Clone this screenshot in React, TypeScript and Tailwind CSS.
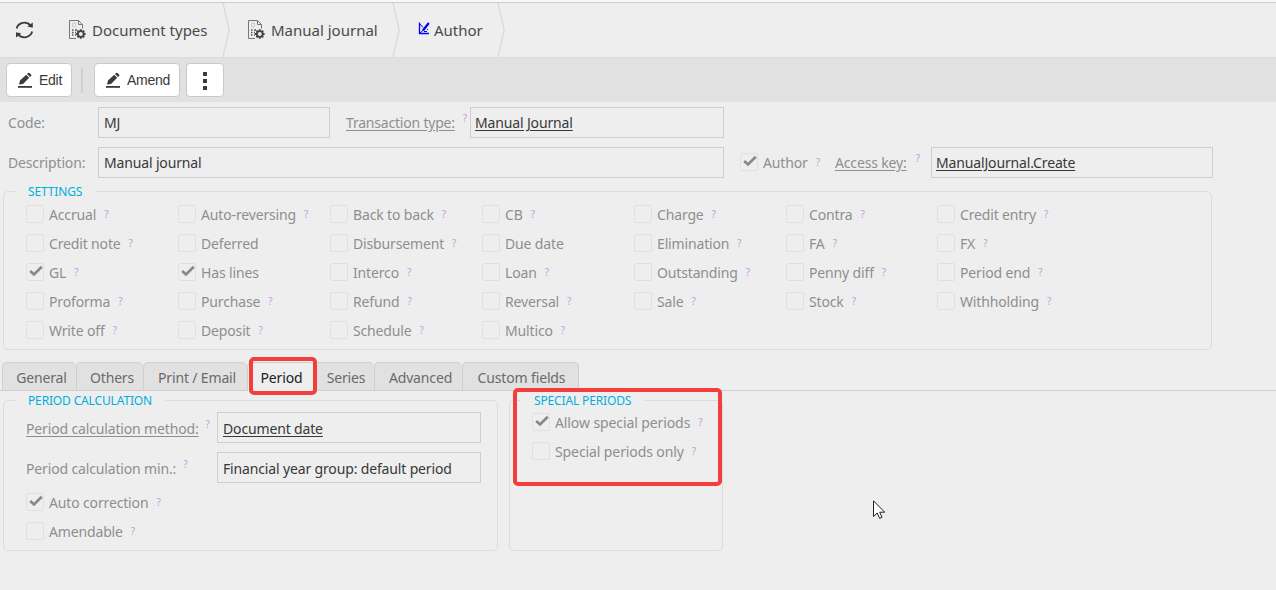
import clsx from "clsx";
import React, { ReactNode } from "react";

type Option = { label: string; help?: boolean; checked?: boolean };

// Laid out row by row, seven columns
const settings: Option[][] = [
  [
    { label: "Accrual", help: true },
    { label: "Auto-reversing", help: true },
    { label: "Back to back", help: true },
    { label: "CB", help: true },
    { label: "Charge", help: true },
    { label: "Contra", help: true },
    { label: "Credit entry", help: true },
  ],
  [
    { label: "Credit note", help: true },
    { label: "Deferred" },
    { label: "Disbursement", help: true },
    { label: "Due date" },
    { label: "Elimination", help: true },
    { label: "FA", help: true },
    { label: "FX", help: true },
  ],
  [
    { label: "GL", help: true, checked: true },
    { label: "Has lines", checked: true },
    { label: "Interco", help: true },
    { label: "Loan", help: true },
    { label: "Outstanding", help: true },
    { label: "Penny diff", help: true },
    { label: "Period end", help: true },
  ],
  [
    { label: "Proforma", help: true },
    { label: "Purchase", help: true },
    { label: "Refund", help: true },
    { label: "Reversal", help: true },
    { label: "Sale", help: true },
    { label: "Stock", help: true },
    { label: "Withholding", help: true },
  ],
  [
    { label: "Write off", help: true },
    { label: "Deposit", help: true },
    { label: "Schedule", help: true },
    { label: "Multico", help: true },
  ],
];

const tabs = [
  { label: "General", width: "w-[74px] pl-[3px]" },
  { label: "Others", width: "w-[67px] pl-[3px]" },
  { label: "Print / Email", width: "w-[104px] pl-[2px]" },
  { label: "Period", width: "w-[67px]", active: true },
  { label: "Series", width: "w-[60px] pl-[2px]" },
  { label: "Advanced", width: "w-[88px] pl-[3px]" },
  { label: "Custom fields", width: "w-[117px] pl-px" },
];

const Help = ({ raised }: { raised?: boolean }) => (
  <span
    className={clsx(
      "text-[10px] leading-none tracking-normal text-[#cb98e6]",
      raised && "mb-[9px]"
    )}
  >
    ?
  </span>
);

const CheckBox = ({ label, help, checked }: Option) => (
  <div className="flex items-center h-[18px]">
    <span className="w-[18px] h-[18px] shrink-0 rounded-[2px] border border-[#e0e0e0] flex items-center justify-center">
      {checked && (
        <svg width="14" height="12" viewBox="0 0 14 12" className="-mt-[2px] ml-px">
          <path
            d="M1.2 6 L5 9.5 L12.8 1.8"
            fill="none"
            stroke="#888"
            strokeWidth="2.7"
          />
        </svg>
      )}
    </span>
    <span className="ml-[5px] mr-[8px] pt-[2px] whitespace-nowrap">{label}</span>
    {help && <Help />}
  </div>
);

const Field = ({
  children,
  className,
  link,
}: {
  children: ReactNode;
  className: string;
  link?: boolean;
}) => (
  <div
    className={clsx(
      "h-[31px] shrink-0 border border-[#cfcfcf] flex items-center text-[#383838] whitespace-nowrap",
      link ? "pl-1" : "pl-[5px]",
      className
    )}
  >
    <span className={clsx(link && "underline underline-offset-2")}>
      {children}
    </span>
  </div>
);

const Group = ({
  title,
  className,
  children,
}: {
  title: string;
  className: string;
  children: ReactNode;
}) => (
  <fieldset
    className={clsx("relative rounded-[5px] border border-[#dcdcdc]", className)}
  >
    <legend className="ml-[11px] h-[19px] px-[13px] text-[12px] leading-[19px] tracking-[-0.15px] text-[#00aedb]">
      {title}
    </legend>
    {children}
  </fieldset>
);

const DocIcon = () => (
  <svg width="19" height="20" viewBox="0 0 19 20" fill="none">
    <path
      d="M8 18.5 H1.5 V0.5 H10.5 L14.5 4.5 V8.5 M10.5 0.5 V4.5 H14.5"
      stroke="#777"
      strokeWidth="1"
    />
    <rect x="4.5" y="3" width="3" height="4" rx="1.2" stroke="#c4c4c4" />
    <path
      d="M4 10 h1.5 M7 10 h2 M4 12.5 h1.5 M7 12.5 h1 M4 15 h1.5 M7 15 h1"
      stroke="#555"
      strokeWidth="1.3"
    />
    <circle cx="12.8" cy="14" r="2.9" stroke="#444" strokeWidth="1.9" />
    <path
      d="M12.8 9.2 V11 M12.8 17 V18.8 M8 14 H9.8 M15.8 14 H17.6 M9.4 10.6 L10.7 11.9 M14.9 16.1 L16.2 17.4 M9.4 17.4 L10.7 16.1 M14.9 11.9 L16.2 10.6"
      stroke="#444"
      strokeWidth="1.9"
    />
  </svg>
);

const AuthorIcon = () => (
  <svg
    width="12"
    height="13"
    viewBox="0 0 12 13"
    fill="none"
    stroke="#0000ff"
    className="-mt-[3px]"
  >
    <path d="M1.5 0.5 V11.5 H11" strokeWidth="1.3" />
    <path d="M1.5 1.5 L5 5.5 M1.5 11.5 L5.5 8" strokeWidth="1" />
    <path d="M10.8 1 L5 8.5" strokeWidth="2.3" />
    <path d="M6 9.5 H9 M9.5 7 V8" strokeWidth="1" />
  </svg>
);

const PenIcon = () => (
  <svg width="15" height="16" viewBox="0 0 15 16" fill="#3a3a3f">
    <path d="M1 12.4 L2 8.6 L8.2 2.8 L11.2 5.8 L5 12 Z M9 2 L10.2 1 Q11 0.5 11.7 1.2 L13.1 2.6 Q13.7 3.3 13.1 4 L12 5.1 Z" />
    <rect x="0" y="14" width="14" height="1.8" />
  </svg>
);

const RefreshIcon = () => (
  <svg width="20" height="20" viewBox="0 0 20 20" fill="none">
    <path
      d="M2.6 8.4 A8 7.6 0 0 1 16.6 5.6 M18.2 11.6 A8 7.6 0 0 1 4.2 14.4"
      stroke="#3c3c3c"
      strokeWidth="1.8"
    />
    <path d="M18.8 2.6 V7.8 L13.4 6.6 Z M2 17.4 V12.2 L7.4 13.4 Z" fill="#3c3c3c" />
  </svg>
);

const Chevron = () => (
  <svg width="9" height="54" viewBox="0 0 9 54" className="shrink-0">
    <path d="M1 0 L7.2 27 L1 54" fill="none" stroke="#d8d8d8" strokeWidth="1.2" />
  </svg>
);

const Button = ({
  children,
  className,
}: {
  children: ReactNode;
  className: string;
}) => (
  <button
    className={clsx(
      "h-[34px] flex items-center rounded-[4px] border border-[#cacaca] bg-white text-[14px] text-[#3a3a3a]",
      className
    )}
  >
    {children}
  </button>
);

const App = () => {
  return (
    <div className="relative w-[1276px] h-[590px] overflow-hidden bg-[#eeeeee] font-['Noto_Sans',sans-serif] text-[14px] leading-[20px] tracking-[-0.15px] text-[#8e8e8e]">
      {/* Breadcrumbs */}
      <div className="h-[57px] border-t-2 border-t-[#f7f7f7]">
        <div className="h-[55px] flex items-center border-t border-[#cccccc] text-[15px] tracking-normal text-[#4a4a4a]">
          <div className="w-[68px] pl-[14px]">
            <RefreshIcon />
          </div>
          <div className="w-[154px] flex items-center whitespace-nowrap">
            <DocIcon />
            <span className="ml-[5px]">Document types</span>
          </div>
          <Chevron />
          <div className="w-[161px] pl-[16px] flex items-center whitespace-nowrap">
            <DocIcon />
            <span className="ml-[5px]">Manual journal</span>
          </div>
          <Chevron />
          <div className="w-[96px] pl-[17px] flex items-center whitespace-nowrap">
            <AuthorIcon />
            <span className="ml-[4px]">Author</span>
          </div>
          <Chevron />
        </div>
      </div>

      {/* Toolbar */}
      <div className="h-[45px] pl-[6px] flex items-center border-t border-[#dadada] bg-[#e1e1e1] font-['Liberation_Sans',sans-serif] tracking-[-0.25px]">
        <Button className="w-[66px] pl-[11px] gap-[6px]">
          <PenIcon />
          Edit
        </Button>
        <div className="w-[2px] h-[25px] ml-[9px] mr-[11px] bg-[#d0d0d0]" />
        <Button className="w-[86px] pl-[11px] gap-[6px]">
          <PenIcon />
          Amend
        </Button>
        <Button className="w-[38px] ml-[6px] pt-[2px] flex-col justify-center gap-[3px]">
          <span className="w-1 h-1 bg-[#3a3a3f]" />
          <span className="w-1 h-1 bg-[#3a3a3f]" />
          <span className="w-1 h-1 bg-[#3a3a3f]" />
        </Button>
      </div>

      {/* Document header */}
      <div className="pt-[5px] pl-2 flex flex-col gap-[9px]">
        <div className="flex items-center">
          <span className="w-[90px]">Code:</span>
          <Field className="w-[232px]">MJ</Field>
          <div className="w-[140px] pl-4 pr-[3px] flex items-center justify-between whitespace-nowrap">
            <span className="underline underline-offset-2 tracking-[-0.2px]">
              Transaction type:
            </span>
            <Help raised />
          </div>
          <Field link className="w-[254px]">
            Manual Journal
          </Field>
        </div>
        <div className="flex items-center">
          <span className="w-[90px]">Description:</span>
          <Field className="w-[626px]">Manual journal</Field>
          <div className="w-[111px] pl-4 pb-[2px]">
            <CheckBox label="Author" help checked />
          </div>
          <div className="w-[96px] pr-[11px] flex items-center justify-between whitespace-nowrap">
            <span className="underline underline-offset-2">Access key:</span>
            <Help raised />
          </div>
          <Field link className="w-[282px]">
            ManualJournal.Create
          </Field>
        </div>
      </div>

      <Group title="SETTINGS" className="ml-[3px] mt-[4px] w-[1209px] h-[168px]">
        <div className="pt-[4px] pl-[22px] flex flex-col gap-[11px]">
          {settings.map((row, i) => (
            <div key={i} className="grid grid-cols-[repeat(5,152px)_151px_152px]">
              {row.map((item) => (
                <CheckBox key={item.label} {...item} />
              ))}
            </div>
          ))}
        </div>
      </Group>

      {/* Tabs */}
      <div className="mt-[12px] h-[29px] pl-[2px] flex border-b border-[#cfcfcf]">
        {tabs.map((tab) => (
          <div
            key={tab.label}
            className={clsx(
              "relative flex items-center justify-center whitespace-nowrap rounded-t-[5px] border-t border-l border-[#cfcfcf] last:border-r",
              tab.active
                ? "h-[29px] bg-[#eeeeee] text-[#222]"
                : "h-[28px] bg-[#e1e1e1] text-[#6a6a6a]",
              tab.width
            )}
          >
            <span className="pt-[2px] pl-px">{tab.label}</span>
            {tab.active && (
              <span className="absolute z-10 -top-[6px] left-px w-[68px] h-[38px] rounded-[5px] border-4 border-[#f43d3d]" />
            )}
          </div>
        ))}
      </div>

      {/* Period tab */}
      <div className="pl-[3px] flex gap-[11px]">
        <Group title="PERIOD CALCULATION" className="w-[495px] h-[160px]">
          <div className="pt-[2px] pl-[22px] flex flex-col gap-[9px]">
            <div className="flex items-center">
              <div className="w-[191px] pt-[2px] flex items-center gap-[7px] whitespace-nowrap">
                <span className="underline underline-offset-2">
                  Period calculation method:
                </span>
                <Help raised />
              </div>
              <Field className="w-[264px] pt-[2px]">
                <span className="underline underline-offset-2">Document date</span>
              </Field>
            </div>
            <div className="flex items-center">
              <div className="w-[191px] pt-[2px] flex items-center gap-[7px] whitespace-nowrap">
                <span>Period calculation min.:</span>
                <Help raised />
              </div>
              <Field className="w-[264px] pt-[2px]">
                Financial year group: default period
              </Field>
            </div>
          </div>
          <div className="pt-[10px] pl-[22px] flex flex-col gap-[11px]">
            <CheckBox label="Auto correction" help checked />
            <CheckBox label="Amendable" help />
          </div>
        </Group>
        <Group title="SPECIAL PERIODS" className="w-[214px] h-[160px]">
          <div className="pt-[3px] pl-[22px] flex flex-col gap-[11px] tracking-[-0.1px]">
            <CheckBox label="Allow special periods" help checked />
            <CheckBox label="Special periods only" help />
          </div>
          <span className="absolute -top-[22px] left-[3px] w-[209px] h-[98px] rounded-[5px] border-4 border-[#f43d3d]" />
        </Group>
      </div>

      {/* Mouse pointer */}
      <svg
        width="13"
        height="20"
        viewBox="0 0 13 20"
        className="absolute left-[873px] top-[500px]"
      >
        <path
          d="M0.5 0.8 V16.5 L4.2 13 L6.6 18.4 L9 17.3 L6.7 12.2 H11.7 Z"
          fill="#fff"
          stroke="#1f1f2a"
          strokeWidth="1"
        />
      </svg>
    </div>
  );
};

export default App;
